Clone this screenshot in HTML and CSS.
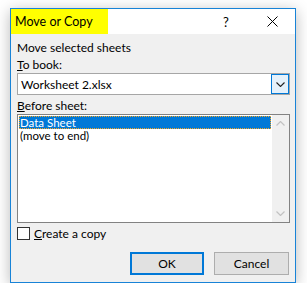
FILE: index.html
```html
<!DOCTYPE html>
<html lang="en">
<head>
  <meta charset="UTF-8" />
  <meta name="viewport" content="width=device-width, initial-scale=1.0" />
  <title>Move or Copy</title>
  <link rel="stylesheet" href="styles.css">
</head>
<body>
  <div class="dialog">
    <div class="titlebar">
      <span class="title">Move or Copy</span>
      <span class="ctl help">?</span>
      <span class="ctl close">
        <svg width="11" height="11" viewBox="0 0 11 11"><path d="M0.5 0.5 L10.5 10.5 M10.5 0.5 L0.5 10.5" stroke="#000" stroke-width="1" fill="none"/></svg>
      </span>
    </div>

    <div class="content">
      <div class="label">Move selected sheets</div>
      <div class="label label-book"><u>T</u>o book:</div>
      <div class="combo">
        <span class="combo-value">Worksheet 2.xlsx</span>
        <span class="combo-btn">
          <svg width="9" height="5" viewBox="0 0 9 5"><path d="M0.5 0.5 L4.5 4.5 L8.5 0.5" stroke="#222" stroke-width="1.1" fill="none"/></svg>
        </span>
      </div>

      <div class="label label-before"><u>B</u>efore sheet:</div>
      <div class="listbox">
        <ul class="items">
          <li class="selected">Data Sheet</li>
          <li>(move to end)</li>
        </ul>
        <div class="scrollbar">
          <span class="arrow">
            <svg width="9" height="5" viewBox="0 0 9 5"><path d="M0.5 4.5 L4.5 0.5 L8.5 4.5" stroke="#c2c2c2" stroke-width="1.2" fill="none"/></svg>
          </span>
          <span class="arrow">
            <svg width="9" height="5" viewBox="0 0 9 5"><path d="M0.5 0.5 L4.5 4.5 L8.5 0.5" stroke="#c2c2c2" stroke-width="1.2" fill="none"/></svg>
          </span>
        </div>
      </div>

      <label class="check">
        <span class="box"></span>
        <span><u>C</u>reate a copy</span>
      </label>

      <div class="buttons">
        <button class="btn btn-default">OK</button>
        <button class="btn">Cancel</button>
      </div>
    </div>
  </div>
</body>
</html>
```

FILE: styles.css
```css
body {
  margin: 0;
  padding: 8px 0 0 10px;
  background: #fff;
  font-family: Lato, "Liberation Sans", sans-serif;
  font-size: 12px;
  color: #000;
}
.dialog {
  box-sizing: border-box;
  width: 286px;
  height: 275px;
  border: 1px solid #1883d7;
  background: #f0f0f0;
  box-shadow: 0 3px 14px rgba(0,0,0,0.28);
}
.titlebar {
  display: flex;
  align-items: center;
  height: 25px;
  background: #fff;
}
.title {
  box-sizing: border-box;
  width: 97px;
  height: 25px;
  padding-left: 4px;
  display: flex;
  align-items: center;
  background: #ffff00;
  font-size: 12.5px;
}
.ctl {
  width: 46px;
  height: 25px;
  display: flex;
  align-items: center;
  justify-content: center;
}
.help {
  margin-left: auto;
  font-size: 13px;
}
.content {
  padding: 6px 5px 0 6px;
}
.label {
  line-height: 16px;
  height: 16px;
}
.label-book {
  margin-top: 1px;
}
.label-before {
  margin-top: 3px;
}
.combo {
  box-sizing: border-box;
  height: 22px;
  display: flex;
  align-items: center;
  border: 1px solid #a6a6a6;
  background: #fff;
}
.combo-value {
  padding-left: 3px;
}
.combo-btn {
  box-sizing: border-box;
  margin-left: auto;
  width: 18px;
  height: 20px;
  display: flex;
  align-items: center;
  justify-content: center;
  border: 1px solid #0078d7;
  background: #e5f1fb;
}
.listbox {
  box-sizing: border-box;
  height: 109px;
  display: flex;
  border: 1px solid #828282;
  background: #fff;
}
.items {
  flex: 1;
  list-style: none;
  margin: 0;
  padding: 1px;
}
.items li {
  height: 13px;
  line-height: 13px;
  padding-left: 1px;
  font-size: 11.5px;
  overflow: hidden;
}
.items li.selected {
  background: #0078d7;
  color: #fff;
  outline: 1px dotted #f5a623;
  outline-offset: -1px;
}
.scrollbar {
  width: 17px;
  display: flex;
  flex-direction: column;
  justify-content: space-between;
  background: #f0f0f0;
}
.arrow {
  height: 17px;
  display: flex;
  align-items: center;
  justify-content: center;
}
.check {
  margin-top: 4px;
  display: flex;
  align-items: center;
  height: 13px;
}
.box {
  box-sizing: border-box;
  width: 13px;
  height: 13px;
  margin-right: 4px;
  border: 1px solid #333;
  background: #fff;
}
.buttons {
  margin-top: 12px;
  margin-right: 1px;
  display: flex;
  justify-content: flex-end;
  gap: 10px;
}
.btn {
  box-sizing: border-box;
  width: 75px;
  height: 23px;
  padding: 0;
  border: 1px solid #adadad;
  background: #e1e1e1;
  font-family: inherit;
  font-size: 12px;
  color: #000;
}
.btn-default {
  width: 74px;
  border: 2px solid #0078d7;
}
```
